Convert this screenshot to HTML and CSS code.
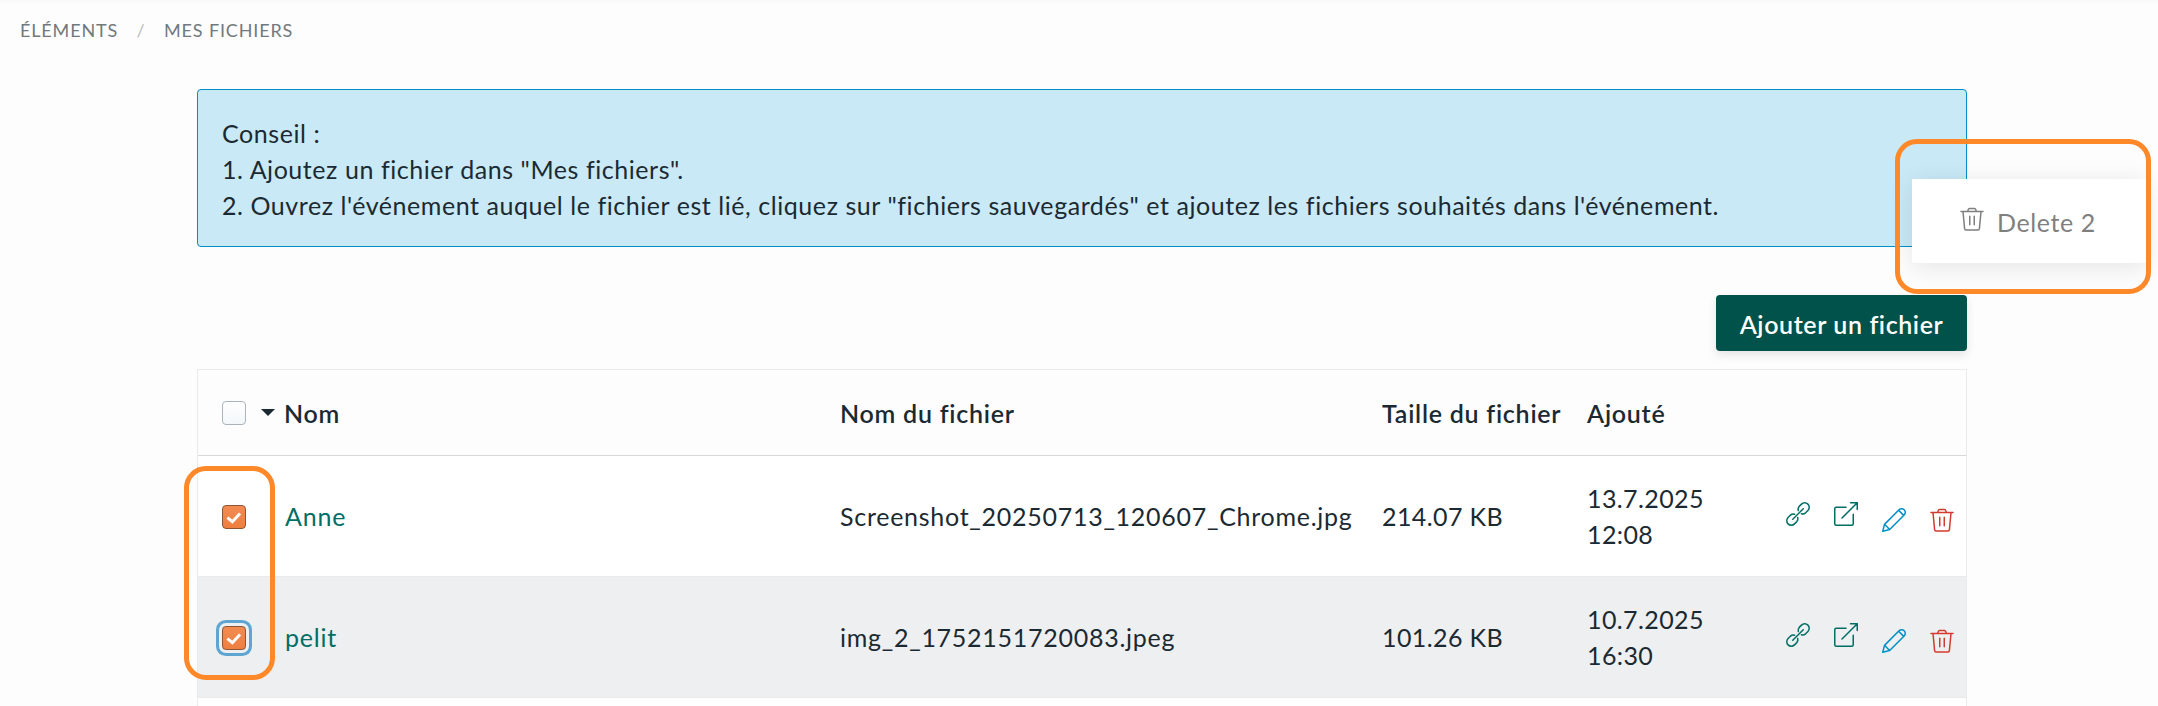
FILE: index.html
```html
<!DOCTYPE html>
<html lang="fr">
  <head>
    <meta charset="UTF-8">
    <meta name="viewport" content="width=device-width, initial-scale=1.0">
    <title>Mes fichiers</title>
    <link rel="stylesheet" href="styles.css">
  </head>
  <body>
    <!-- Icon definitions -->
    <svg class="icon-defs" width="0" height="0">
      <symbol id="icon-link" viewBox="0 0 24 24">
        <path d="M6.75 17.25l10.5-10.5M12.3 8.6a4.6 4.6 0 0 1 .9-4.2l2.3-2.3a4.5 4.5 0 0 1 6.4 6.4l-2.3 2.3a4.6 4.6 0 0 1-4.2.9M8.6 12.3a4.6 4.6 0 0 0-4.2.9l-2.3 2.3a4.5 4.5 0 0 0 6.4 6.4l2.3-2.3a4.6 4.6 0 0 0 .9-4.2"/>
      </symbol>
      <symbol id="icon-open" viewBox="0 0 24 24">
        <path d="M8 16L23.25.75M16.5.75h6.75V7.5M12 5.25H2.25a1.5 1.5 0 0 0-1.5 1.5v15a1.5 1.5 0 0 0 1.5 1.5h15.5a1.5 1.5 0 0 0 1.5-1.5v-9.5"/>
      </symbol>
      <symbol id="icon-edit" viewBox="0 0 24 24">
        <path d="M22.19 1.81a3.64 3.64 0 0 0-5.17.035l-14.5 14.5L.75 23.25l6.905-1.771 14.5-14.5a3.64 3.64 0 0 0 .035-5.169zM16.606 2.26l5.134 5.134M2.521 16.344l5.139 5.13"/>
      </symbol>
      <symbol id="icon-trash" viewBox="0 0 24 24">
        <path d="M1 4.5h22M3 4.5l1.6 17.1a1.5 1.5 0 0 0 1.5 1.4h11.8a1.5 1.5 0 0 0 1.5-1.4L21 4.5M7.7 4.2l.5-1.6a1.5 1.5 0 0 1 1.4-1.1h4.8a1.5 1.5 0 0 1 1.4 1.1l.5 1.6M9.75 9.2v8.6M14.25 9.2v8.6"/>
      </symbol>
      <symbol id="icon-check" viewBox="0 0 24 24">
        <path d="M4.8 12.6l5.4 4.6 8.4-9"/>
      </symbol>
    </svg>

    <nav class="breadcrumb">
      <a class="crumb">Éléments</a>
      <span class="crumb-sep">/</span>
      <a class="crumb">Mes fichiers</a>
    </nav>

    <main class="content">
      <div class="tip">
        <div>Conseil :</div>
        <div>1. Ajoutez un fichier dans "Mes fichiers".</div>
        <div>2. Ouvrez l'événement auquel le fichier est lié, cliquez sur "fichiers sauvegardés" et ajoutez les fichiers souhaités dans l'événement.</div>
      </div>

      <div class="toolbar">
        <button class="btn-add">Ajouter un fichier</button>
      </div>

      <table class="files">
        <colgroup>
          <col class="col-check">
          <col class="col-name">
          <col class="col-file">
          <col class="col-size">
          <col class="col-date">
          <col class="col-actions">
        </colgroup>
        <thead>
          <tr>
            <th class="cell-check"><span class="checkbox"></span></th>
            <th class="cell-sort"><span class="sort"><span class="caret"></span>Nom</span></th>
            <th>Nom du fichier</th>
            <th>Taille du fichier</th>
            <th>Ajouté</th>
            <th></th>
          </tr>
        </thead>
        <tbody>
          <tr>
            <td class="cell-check"><span class="checkbox checked"><svg><use href="#icon-check"/></svg></span></td>
            <td class="cell-name"><a>Anne</a></td>
            <td class="cell-file">Screenshot_20250713_120607_Chrome.jpg</td>
            <td>214.07 KB</td>
            <td>13.7.2025<br>12:08</td>
            <td>
              <div class="actions">
                <svg class="icon"><use href="#icon-link"/></svg>
                <svg class="icon"><use href="#icon-open"/></svg>
                <svg class="icon icon-edit"><use href="#icon-edit"/></svg>
                <svg class="icon icon-delete"><use href="#icon-trash"/></svg>
              </div>
            </td>
          </tr>
          <tr class="active">
            <td class="cell-check"><span class="checkbox checked focused"><svg><use href="#icon-check"/></svg></span></td>
            <td class="cell-name"><a>pelit</a></td>
            <td class="cell-file">img_2_1752151720083.jpeg</td>
            <td>101.26 KB</td>
            <td>10.7.2025<br>16:30</td>
            <td>
              <div class="actions">
                <svg class="icon"><use href="#icon-link"/></svg>
                <svg class="icon"><use href="#icon-open"/></svg>
                <svg class="icon icon-edit"><use href="#icon-edit"/></svg>
                <svg class="icon icon-delete"><use href="#icon-trash"/></svg>
              </div>
            </td>
          </tr>
          <tr class="next">
            <td colspan="6"></td>
          </tr>
        </tbody>
      </table>
    </main>

    <!-- Floating bulk action -->
    <div class="bulk-action">
      <svg class="icon"><use href="#icon-trash"/></svg>
      <span>Delete 2</span>
    </div>

    <!-- Highlights -->
    <div class="highlight highlight-bulk"></div>
    <div class="highlight highlight-checks"></div>
  </body>
</html>
```

FILE: styles.css
```css
* {
  box-sizing: border-box;
}

body {
  position: relative;
  margin: 0;
  height: 706px;
  overflow: hidden;
  background: linear-gradient(#f8f8f8, #fdfdfd 5px);
  color: #1b2a32;
  font-family: Lato, sans-serif;
  font-size: 25px;
  line-height: 36px;
}

.icon-defs {
  position: absolute;
}

.breadcrumb {
  display: flex;
  height: 89px;
  padding: 18px 0 0 20px;
  font-size: 18px;
  line-height: 24px;
  letter-spacing: 0.85px;
  text-transform: uppercase;
  color: #71797e;
}

.crumb-sep {
  width: 46px;
  text-align: center;
  color: #b9bdc0;
}

.content {
  width: 1770px;
  margin-left: 197px;
}

.tip {
  height: 158px;
  padding: 25px 24px 0;
  background: #c9e9f6;
  border: 1px solid #0090c6;
  border-radius: 4px;
  letter-spacing: 0.56px;
  white-space: nowrap;
}

.toolbar {
  display: flex;
  justify-content: flex-end;
  padding: 48px 0 18px;
}

.btn-add {
  width: 251px;
  height: 56px;
  padding: 1px 0 0;
  border: 0;
  border-radius: 4px;
  background: #00524a;
  box-shadow: 0 4px 10px rgba(0, 0, 0, 0.1);
  color: #fff;
  font: 600 25px/36px Lato, sans-serif;
  letter-spacing: 0.6px;
  white-space: nowrap;
}

.files {
  width: 100%;
  table-layout: fixed;
  border: 1px solid #e8eaeb;
  border-bottom: 0;
  border-spacing: 0;
}

.col-check { width: 63px; }
.col-name { width: 567px; }
.col-file { width: 542px; }
.col-size { width: 205px; }
.col-date { width: 170px; }

th, td {
  padding: 1px 12px 0;
  text-align: left;
  white-space: nowrap;
}

th {
  height: 86px;
  border-bottom: 1px solid #d6d9db;
  font-weight: 600;
  letter-spacing: 0.75px;
}

td {
  height: 121px;
  padding-top: 0;
  background: #fff;
  border-bottom: 1px solid #e8eaeb;
  letter-spacing: 0.4px;
}

.active td {
  background: #eeeff1;
}

.next td {
  height: 8px;
  padding: 0;
  border-bottom: 0;
}

.cell-check {
  padding: 0 0 0 24px;
}

td.cell-check {
  padding-top: 2px;
}

.cell-sort {
  padding-left: 0;
}

.cell-name {
  padding-left: 24px;
  color: #006e64;
  letter-spacing: 0.8px;
}

.cell-file {
  letter-spacing: 0.73px;
}

.sort {
  display: flex;
  align-items: center;
}

.caret {
  margin: 0 9px 2px 0;
  border: 7px solid transparent;
  border-top-color: #1b2a32;
  border-bottom: 0;
}

.checkbox {
  display: block;
  width: 24px;
  height: 24px;
  border: 1px solid #aab4bb;
  border-radius: 4px;
  background: linear-gradient(#fff, #f3f7f9);
}

.checkbox.checked {
  border-color: #8d5535;
  background: linear-gradient(#f28b52, #ee7f40);
}

.checkbox.focused {
  box-shadow: 0 0 0 3px #eeeff1, 0 0 0 6px #5ea6d1;
}

.checkbox svg {
  display: block;
  width: 22px;
  height: 22px;
  fill: none;
  stroke: #fff;
  stroke-width: 3.3;
}

.icon {
  width: 24px;
  height: 24px;
  fill: none;
  stroke: #006e64;
  stroke-width: 1.5;
  stroke-linecap: round;
  stroke-linejoin: round;
}

.actions {
  display: flex;
  justify-content: flex-end;
  gap: 24px;
  padding-top: 2px;
}

.icon-edit {
  margin-top: 6px;
  stroke: #0090c6;
}

.icon-delete {
  margin-top: 6px;
  stroke: #d23c2d;
}

.bulk-action {
  position: absolute;
  top: 179px;
  left: 1912px;
  display: flex;
  gap: 13px;
  width: 234px;
  height: 84px;
  padding: 25px 0 0 48px;
  background: #fff;
  box-shadow: 0 4px 24px rgba(0, 0, 0, 0.1);
  color: #7f7f7f;
  letter-spacing: 0.6px;
}

.bulk-action .icon {
  margin-top: 3px;
  stroke: #7f7f7f;
}

.highlight {
  position: absolute;
  border: 5px solid #ff8829;
  border-radius: 22px;
}

.highlight-bulk {
  top: 139px;
  left: 1895px;
  width: 256px;
  height: 155px;
}

.highlight-checks {
  top: 466px;
  left: 184px;
  width: 91px;
  height: 214px;
}
```
